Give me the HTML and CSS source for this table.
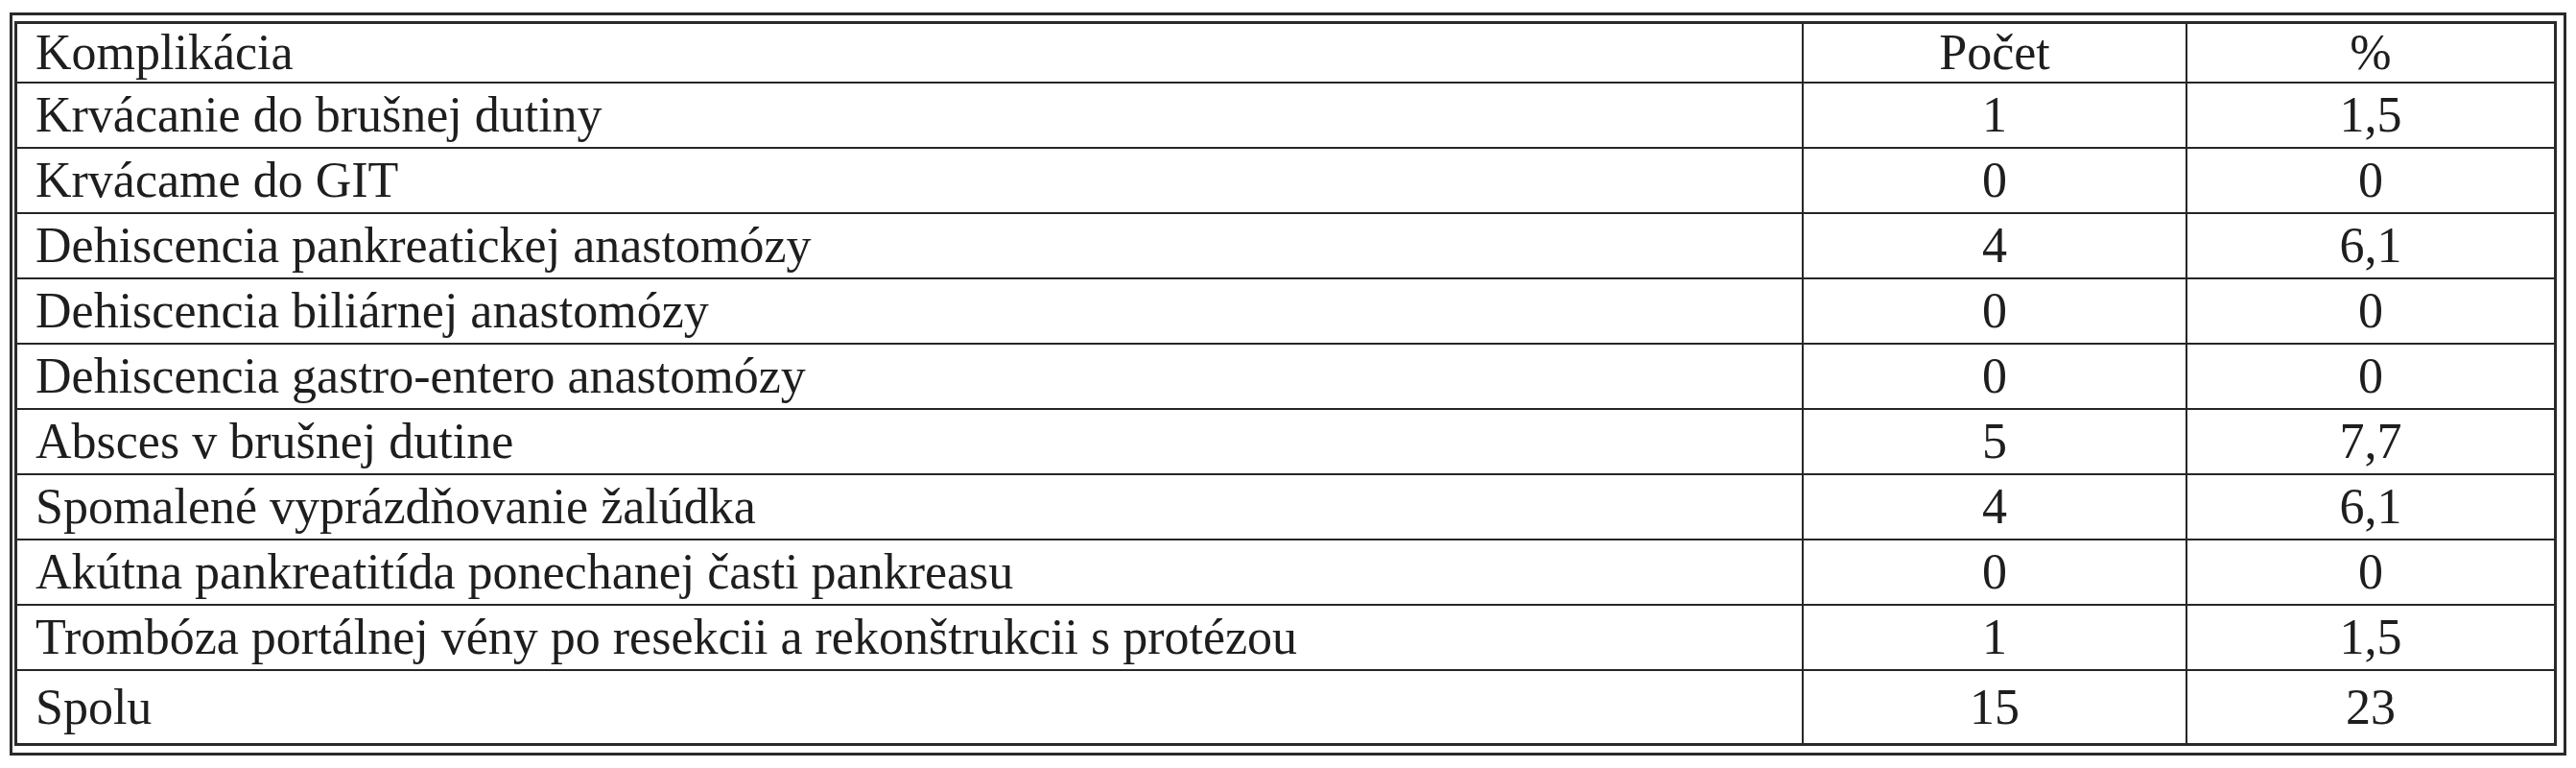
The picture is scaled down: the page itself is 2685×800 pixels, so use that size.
FILE: index.html
```html
<!DOCTYPE html>
<html lang="sk">
<head>
<meta charset="utf-8">
<title>Komplikácie</title>
<link rel="stylesheet" href="styles.css">
</head>
<body>
<div class="frame">
  <table class="data">
    <tr class="head">
      <td class="name">Komplikácia</td>
      <td class="num">Počet</td>
      <td class="num">%</td>
    </tr>
    <tr><td class="name">Krvácanie do brušnej dutiny</td><td class="num">1</td><td class="num">1,5</td></tr>
    <tr><td class="name">Krvácame do GIT</td><td class="num">0</td><td class="num">0</td></tr>
    <tr><td class="name">Dehiscencia pankreatickej anastomózy</td><td class="num">4</td><td class="num">6,1</td></tr>
    <tr><td class="name">Dehiscencia biliárnej anastomózy</td><td class="num">0</td><td class="num">0</td></tr>
    <tr><td class="name">Dehiscencia gastro-entero anastomózy</td><td class="num">0</td><td class="num">0</td></tr>
    <tr><td class="name">Absces v brušnej dutine</td><td class="num">5</td><td class="num">7,7</td></tr>
    <tr><td class="name">Spomalené vyprázdňovanie žalúdka</td><td class="num">4</td><td class="num">6,1</td></tr>
    <tr><td class="name">Akútna pankreatitída ponechanej časti pankreasu</td><td class="num">0</td><td class="num">0</td></tr>
    <tr><td class="name">Trombóza portálnej vény po resekcii a rekonštrukcii s protézou</td><td class="num">1</td><td class="num">1,5</td></tr>
    <tr class="total"><td class="name">Spolu</td><td class="num">15</td><td class="num">23</td></tr>
  </table>
</div>
</body>
</html>
```
FILE: styles.css
```css
html, body {
  margin: 0;
  padding: 0;
  background: #ffffff;
}
body {
  padding: 13px 0 0 10px;
  font-family: "Liberation Serif", "Times New Roman", serif;
  color: #1e1e1e;
}
.frame {
  width: 2665px;
  height: 774px;
  box-sizing: border-box;
  border: 3px solid #2a2a2a;
  padding: 6px 7px 7px 2px;
}
.data {
  width: 100%;
  height: 100%;
  border-collapse: collapse;
  border: 3px solid #2a2a2a;
  table-layout: fixed;
}
.data td {
  border: 2px solid #262626;
  font-size: 52px;
  line-height: 1;
  padding: 0 19px;
  vertical-align: middle;
  white-space: nowrap;
}
.data td.name {
  width: 1822px;
}
.data td.num {
  text-align: center;
}
.data tr:nth-child(1) td.num:nth-child(2) { width: 360px; }
.data tr {
  height: 68px;
}
.data tr.head {
  height: 62px;
}
.data tr.total {
  height: 77px;
}
```
